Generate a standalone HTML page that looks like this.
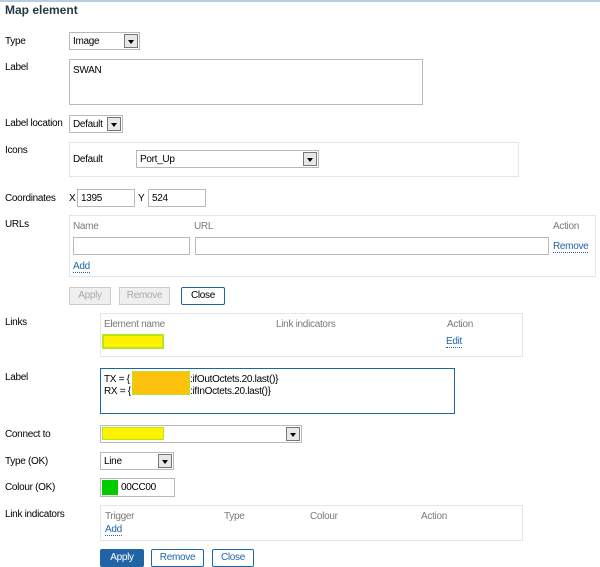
<!DOCTYPE html>
<html><head><style>
body{margin:0;width:600px;height:566px;background:#fff;position:relative;overflow:hidden;font-family:"Liberation Sans",Arial,sans-serif;font-size:10px;letter-spacing:-0.3px;color:#000}
div,span{position:absolute;box-sizing:border-box}
.t{white-space:nowrap;line-height:12px}
.g{color:#7a7a7a}
.lnk{color:#1f65a6;border-bottom:1px dotted #1f65a6;line-height:11px}
.inp{border:1px solid #b9b9b9;background:#fff}
.box{border:1px solid #e6e6e6;background:#fff}
.sel{border:1px solid #b9b9b9;background:#fff}
.arr{position:absolute;right:1px;top:1px;width:14px;bottom:1px;background:#e8e8e8;border:1px solid #777}
.arr:after{content:"";position:absolute;left:3px;top:5px;border-left:3px solid transparent;border-right:3px solid transparent;border-top:4px solid #000}
.btn{border:1px solid #1f65a6;background:#fff;color:#1f65a6;text-align:center;line-height:16px;border-radius:2px}
.dis{border:1px solid #ccc;background:#efefef;color:#aaa;text-align:center;line-height:16px}
</style></head><body>
<div style="left:0;top:0;width:600px;height:2px;background:#b7cde0"></div>
<div class="t" style="left:5px;top:4px;font-weight:bold;font-size:12px;color:#253a45;letter-spacing:0">Map element</div>

<div class="t" style="left:5px;top:36px">Type</div>
<div class="sel" style="left:69px;top:32px;width:71px;height:18px"><span class="t" style="left:3px;top:3px">Image</span><span class="arr"></span></div>

<div class="t" style="left:5px;top:62px">Label</div>
<div class="inp" style="left:69px;top:59px;width:354px;height:46px"><span class="t" style="left:3px;top:5px">SWAN</span></div>

<div class="t" style="left:5px;top:118px">Label location</div>
<div class="sel" style="left:69px;top:115px;width:54px;height:18px"><span class="t" style="left:3px;top:3px">Default</span><span class="arr"></span></div>

<div class="t" style="left:5px;top:145px">Icons</div>
<div class="box" style="left:69px;top:142px;width:450px;height:35px"></div>
<div class="t" style="left:73px;top:154px">Default</div>
<div class="sel" style="left:136px;top:150px;width:183px;height:18px"><span class="t" style="left:3px;top:3px">Port_Up</span><span class="arr"></span></div>

<div class="t" style="left:5px;top:193px">Coordinates</div>
<div class="t" style="left:69px;top:193px">X</div>
<div class="inp" style="left:77px;top:189px;width:58px;height:18px"><span class="t" style="left:3px;top:3px">1395</span></div>
<div class="t" style="left:138px;top:193px">Y</div>
<div class="inp" style="left:148px;top:189px;width:58px;height:18px"><span class="t" style="left:3px;top:3px">524</span></div>

<div class="t" style="left:5px;top:219px">URLs</div>
<div class="box" style="left:69px;top:215px;width:527px;height:62px"></div>
<div class="t g" style="left:73px;top:221px">Name</div>
<div class="t g" style="left:194px;top:221px">URL</div>
<div class="t g" style="left:553px;top:221px">Action</div>
<div class="inp" style="left:73px;top:237px;width:117px;height:18px"></div>
<div class="inp" style="left:195px;top:237px;width:354px;height:18px"></div>
<div class="t lnk" style="left:553px;top:241px">Remove</div>
<div class="t lnk" style="left:73px;top:261px">Add</div>

<div class="dis" style="left:69px;top:287px;width:42px;height:18px">Apply</div>
<div class="dis" style="left:119px;top:287px;width:51px;height:18px">Remove</div>
<div class="btn" style="left:181px;top:287px;width:44px;height:18px;color:#000">Close</div>

<div class="t" style="left:5px;top:317px">Links</div>
<div class="box" style="left:100px;top:313px;width:423px;height:44px"></div>
<div class="t g" style="left:104px;top:319px">Element name</div>
<div class="t g" style="left:276px;top:319px">Link indicators</div>
<div class="t g" style="left:447px;top:319px">Action</div>
<div style="left:102px;top:334px;width:62px;height:15px;background:#fff200;border:2px solid #b5e61d"></div>
<div class="t lnk" style="left:446px;top:336px">Edit</div>

<div class="t" style="left:5px;top:372px">Label</div>
<div style="left:100px;top:368px;width:355px;height:46px;border:1px solid #1f65a6;background:#fff"></div>
<div class="t" style="left:104px;top:374px">TX = {</div>
<div class="t" style="left:190px;top:374px">:ifOutOctets.20.last()}</div>
<div class="t" style="left:104px;top:386px">RX = {</div>
<div class="t" style="left:190px;top:386px">:ifInOctets.20.last()}</div>
<div style="left:132px;top:371px;width:58px;height:24px;background:#fec20e;border:1px solid #b5e61d"></div>

<div class="t" style="left:5px;top:429px">Connect to</div>
<div class="sel" style="left:100px;top:425px;width:202px;height:18px"><span class="arr"></span></div>
<div style="left:102px;top:427px;width:62px;height:13px;background:#fff200;border:1px solid #b5e61d"></div>

<div class="t" style="left:5px;top:456px">Type (OK)</div>
<div class="sel" style="left:100px;top:452px;width:74px;height:18px"><span class="t" style="left:3px;top:3px">Line</span><span class="arr"></span></div>

<div class="t" style="left:5px;top:482px">Colour (OK)</div>
<div class="inp" style="left:100px;top:478px;width:75px;height:19px"><span style="left:1px;top:1px;width:16px;height:15px;background:#00cc00"></span><span class="t" style="left:20px;top:3px">00CC00</span></div>

<div class="t" style="left:5px;top:509px">Link indicators</div>
<div class="box" style="left:100px;top:505px;width:423px;height:36px"></div>
<div class="t g" style="left:105px;top:511px">Trigger</div>
<div class="t g" style="left:224px;top:511px">Type</div>
<div class="t g" style="left:310px;top:511px">Colour</div>
<div class="t g" style="left:421px;top:511px">Action</div>
<div class="t lnk" style="left:105px;top:524px">Add</div>

<div class="btn" style="left:100px;top:549px;width:44px;height:18px;background:#1f65a6;color:#fff">Apply</div>
<div class="btn" style="left:151px;top:549px;width:53px;height:18px">Remove</div>
<div class="btn" style="left:212px;top:549px;width:42px;height:18px">Close</div>
</body></html>
